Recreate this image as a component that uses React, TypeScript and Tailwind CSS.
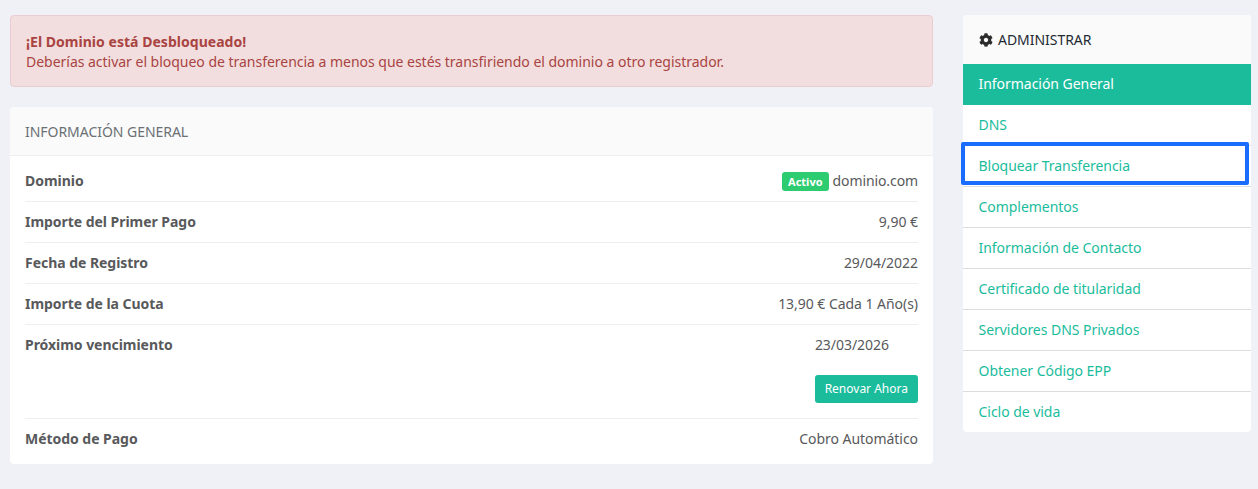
import { FaCog } from "react-icons/fa"

const rows = [
  { label: "Importe del Primer Pago", value: "9,90 €" },
  { label: "Fecha de Registro", value: "29/04/2022" },
  { label: "Importe de la Cuota", value: "13,90 € Cada 1 Año(s)" },
]

const links = [
  "DNS",
  "Bloquear Transferencia",
  "Complementos",
  "Información de Contacto",
  "Certificado de titularidad",
  "Servidores DNS Privados",
  "Obtener Código EPP",
]

export default function App() {
  return (
    <div className="flex h-[489px] items-start overflow-hidden bg-[#f0f1f7] pt-[15px] pl-[10px] pr-[7px] font-['Noto_Sans',sans-serif] text-sm tracking-[-0.04px] text-[#58595b]">
      <div className="w-[923px] shrink-0">
        <div className="h-[72px] rounded border border-[#ebccd1] bg-[#f2dede] px-[15px] pt-[16px] leading-[19px] text-[#a94442]">
          <strong className="font-bold tracking-[0.03px]">¡El Dominio está Desbloqueado!</strong>
          <div className="mt-px tracking-[-0.02px]">Deberías activar el bloqueo de transferencia a menos que estés transfiriendo el dominio a otro registrador.</div>
        </div>

        <div className="mt-5 rounded bg-white">
          <div className="flex h-[49px] items-center rounded-t border-b border-[#eeeeee] bg-[#fafafa] px-[15px] pt-px text-[#6b7075]">
            INFORMACIÓN GENERAL
          </div>
          <div className="px-[15px]">
            <div className="flex h-[46px] items-center justify-between border-b border-[#eeeeee] pt-[5px]">
              <span className="font-bold">Dominio</span>
              <span className="flex items-center tracking-[-0.1px]">
                <span className="mr-[4px] rounded-[3px] bg-[#2ecc71] px-[6px] py-[3px] text-[11px] leading-[13px] font-bold tracking-normal text-white">Activo</span>
                dominio.com
              </span>
            </div>
            {rows.map((row) => (
              <div key={row.label} className="flex h-[41px] items-center justify-between border-b border-[#eeeeee]">
                <span className="font-bold">{row.label}</span>
                <span>{row.value}</span>
              </div>
            ))}
            <div className="h-[94px] border-b border-[#eeeeee] pt-[10px]">
              <div className="flex h-[20px] items-center justify-between">
                <span className="font-bold">Próximo vencimiento</span>
                <span className="mr-[29px]">23/03/2026</span>
              </div>
              <div className="mt-[20px] flex justify-end">
                <button className="h-[28px] rounded-[3px] bg-[#1abc9c] px-[10px] text-xs tracking-normal text-white">Renovar Ahora</button>
              </div>
            </div>
            <div className="flex h-[40px] items-center justify-between">
              <span className="font-bold">Método de Pago</span>
              <span>Cobro Automático</span>
            </div>
          </div>
          <div className="h-[5px]" />
        </div>
      </div>

      <div className="ml-[30px] w-[288px] shrink-0 rounded bg-white">
        <div className="flex h-[49px] items-center gap-[5px] rounded-t bg-[#fafafa] px-4 text-[#1f2a33]">
          <FaCog className="h-[14px] w-[14px] text-[#2b2b2b]" />
          ADMINISTRAR
        </div>
        <div className="flex h-[41px] items-center bg-[#1abc9c] px-[15.5px] pb-px text-white">Información General</div>
        {links.map((link) => (
          <div key={link} className="relative flex h-[41px] items-center border-b border-[#dddddd] px-[15.5px] text-[#1abc9c]">
            {link}
            {link === "Bloquear Transferencia" && (
              <span className="absolute top-[-4px] left-[-2px] h-[43px] w-[288px] rounded-[2px] border-4 border-[#1a6cff]" />
            )}
          </div>
        ))}
        <div className="flex h-[40px] items-center px-[15.5px] text-[#1abc9c]">Ciclo de vida</div>
      </div>
    </div>
  )
}
